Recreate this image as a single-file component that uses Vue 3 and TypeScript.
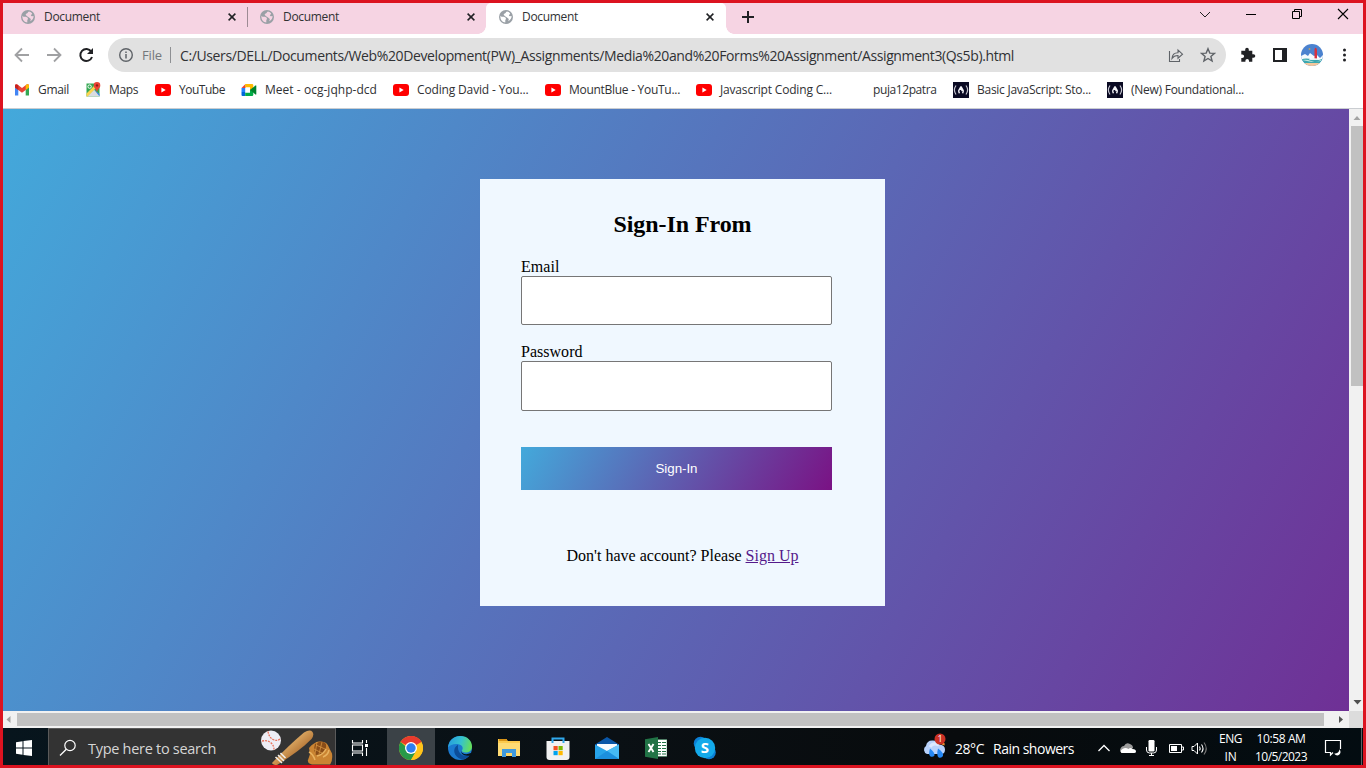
<script setup lang="ts">
import { nextTick, type Directive } from 'vue'

interface Bookmark {
  label: string
  icon: 'gmail' | 'maps' | 'youtube' | 'meet' | 'none' | 'fcc'
  textWidth: number
}

const tabs = [
  { title: 'Document', active: false },
  { title: 'Document', active: false },
  { title: 'Document', active: true },
]

const bookmarks: Bookmark[] = [
  { label: 'Gmail', icon: 'gmail', textWidth: 31 },
  { label: 'Maps', icon: 'maps', textWidth: 29 },
  { label: 'YouTube', icon: 'youtube', textWidth: 46 },
  { label: 'Meet - ocg-jqhp-dcd', icon: 'meet', textWidth: 112 },
  { label: 'Coding David - You...', icon: 'youtube', textWidth: 111.5 },
  { label: 'MountBlue - YouTu...', icon: 'youtube', textWidth: 111 },
  { label: 'Javascript Coding C...', icon: 'youtube', textWidth: 112 },
  { label: 'puja12patra', icon: 'none', textWidth: 63.5 },
  { label: 'Basic JavaScript: Sto...', icon: 'fcc', textWidth: 114 },
  { label: '(New) Foundational...', icon: 'fcc', textWidth: 113 },
]

// Tracks a single line of text so that it spans the given number of pixels.
const vFit: Directive<HTMLElement, number> = {
  mounted(el, binding) {
    nextTick(() => {
      const count = (el.textContent ?? '').trim().length
      const natural = el.getBoundingClientRect().width
      el.style.letterSpacing = `${(binding.value - natural) / count}px`
    })
  },
}
</script>

<template>
  <div class="screen">
    <header class="tabstrip">
      <div v-for="(tab, i) in tabs" :key="i" class="tab" :class="{ active: tab.active, divided: i === 0 }">
        <svg class="globe" width="14" height="14" viewBox="2 2 20 20">
          <path d="M12 2a10 10 0 1 0 0 20 10 10 0 0 0 0-20zm-1 17.930c-3.950-.49-7-3.850-7-7.930 0-.62.080-1.210.210-1.790L5.500 11.500H9q3 .3 3 3l-1 2v3.430zM15 18q1-2 1-3l-3-2.500c-1-.6-1-1-2.500-1.500L8.500 8.500 10 7q2-.5 2-2l1.500-1q3 .5 4.500 3l-2 3 1.500 1 2.400-.5q.5 4.500-4.900 7.500z" fill="#9aa0a6" />
        </svg>
        <span v-fit="56" class="tab-title">{{ tab.title }}</span>
        <svg class="close" width="8" height="8" viewBox="0 0 8 8"><path d="M.6.6l6.800 6.800M7.400.6L.6 7.400" stroke="#202124" stroke-width="1.500" /></svg>
      </div>
      <svg class="plus" width="12" height="12" viewBox="0 0 12 12"><path d="M6 0v12M0 6h12" stroke="#202124" stroke-width="2" /></svg>
      <div class="window-buttons">
        <svg width="46" height="22" viewBox="0 0 46 22"><path d="M18 9l5 5 5-5" fill="none" stroke="#222" /></svg>
        <svg width="46" height="22" viewBox="0 0 46 22"><path d="M18 11.500h10" stroke="#000" /></svg>
        <svg width="46" height="22" viewBox="0 0 46 22"><path d="M18.500 8.500h7v7h-7zM20.500 8.500v-2h7v7h-2" fill="none" stroke="#000" /></svg>
        <svg width="46" height="22" viewBox="0 0 46 22"><path d="M18 6l10 10M28 6L18 16" stroke="#000" stroke-width="1.100" /></svg>
      </div>
    </header>

    <div class="toolbar">
      <svg width="32" height="32" viewBox="0 0 32 32"><path d="M23 16H10M16 9.500L9.500 16l6.500 6.500" fill="none" stroke="#a0a1a3" stroke-width="1.800" /></svg>
      <svg width="32" height="32" viewBox="0 0 32 32"><path d="M9 16h13M16 9.500l6.500 6.500-6.500 6.500" fill="none" stroke="#a0a1a3" stroke-width="1.800" /></svg>
      <svg width="32" height="32" viewBox="0 0 32 32"><path d="M21.300 12.600A6 6 0 1 0 22 18" fill="none" stroke="#202124" stroke-width="2" /><path d="M23 9v6h-6z" fill="#202124" /></svg>
      <div class="omnibox">
        <svg class="info" width="14" height="14" viewBox="0 0 14 14"><circle cx="7" cy="7" r="6.300" fill="none" stroke="#5f6368" stroke-width="1.400" /><path d="M7 6v4.500M7 3.500V5" stroke="#5f6368" stroke-width="1.500" /></svg>
        <span class="scheme"><span v-fit="20">File</span></span>
        <i class="sep" />
        <span v-fit="834" class="url">C:/Users/DELL/Documents/Web%20Development(PW)_Assignments/Media%20and%20Forms%20Assignment/Assignment3(Qs5b).html</span>
        <svg class="share" width="16" height="16" viewBox="0 0 16 16"><path d="M1.500 4v10.500h10V12M4 11.500c.3-4 2.500-5.800 6-5.800V3l4.500 4.200L10 11.200V8.500c-2.800-.1-4.500.8-6 3z" fill="none" stroke="#5f6368" stroke-width="1.100" /></svg>
        <svg class="star" width="16" height="16" viewBox="0 0 16 16"><path d="M8 1.700l1.800 4.400 4.700.3-3.600 3 1.200 4.600L8 11.500 3.900 14l1.200-4.600-3.600-3 4.700-.3z" fill="none" stroke="#5f6368" stroke-width="1.400" /></svg>
      </div>
      <div class="actions">
        <svg width="16" height="16" viewBox="0 0 16 16"><path d="M1.300 3.800h3.900V2.600a1.800 1.800 0 0 1 3.600 0v1.200h3.500v3.400h1.200a1.800 1.800 0 0 1 0 3.600h-1.200v4H9v-1.100a1.800 1.800 0 0 0-3.600 0v1.100H1.300V11h1a1.800 1.800 0 0 0 0-3.600h-1z" fill="#202124" /></svg>
        <svg width="16" height="16" viewBox="0 0 16 16"><path d="M2 2h12v12H2z" fill="#fff" stroke="#202124" stroke-width="2" /><path d="M10 2h4v12h-4z" fill="#202124" /></svg>
        <svg width="22" height="22" viewBox="0 0 22 22">
          <clipPath id="face"><circle cx="11" cy="11" r="11" /></clipPath>
          <g clip-path="url(#face)">
            <path fill="#4b82cf" d="M0 0h22v22H0z" />
            <path fill="#f5f9fc" d="M0 12l4-2 3 2 2-3 4 3 3-1 3 3 3-3v5H0z" />
            <path fill="#3ca8b0" d="M0 15.500q5-2 11 0t11-1v6H0z" />
            <path fill="#c4e8df" d="M1 16q5-1 9 1t10-1v1l-9 1z" />
            <path fill="#f5c79c" d="M0 19h22v3H0z" />
            <path fill="#d9303c" d="M13.500 5q1.500-3 2.500 1v8.500h-2.500z" />
            <path fill="#e6f3f4" d="M8 15.500q5-2 10 0v.5H8z" /><circle cx="8.500" cy="5" r="1" fill="#b6a26b" />
          </g>
        </svg>
        <svg width="16" height="16" viewBox="0 0 16 16"><g fill="#202124"><circle cx="8.500" cy="3" r="1.500" /><circle cx="8.500" cy="8" r="1.500" /><circle cx="8.500" cy="13" r="1.500" /></g></svg>
      </div>
    </div>

    <nav class="bookmarks">
      <div v-for="(b, i) in bookmarks" :key="i" class="bookmark">
        <svg v-if="b.icon === 'gmail'" width="16" height="16" viewBox="0 0 16 16"><path d="M1 4v9.500h3.300V6.500z" fill="#4285f4" /><path d="M11.700 6.500v7H15V4z" fill="#34a853" /><path d="M1 3.700C1 2.200 2.700 2 3.700 2.800L8 6l4.300-3.200C13.300 2 15 2.200 15 3.700V5.600L8 10.700 1 5.600z" fill="#ea4335" /><path d="M11.700 3.300V8L15 5.600V3.800C15 2.200 13.300 2 12.300 2.800z" fill="#fbbc04" /><path d="M1 3.800v1.800L4.300 8V3.300C3 2 1 2.200 1 3.800z" fill="#c5221f" /></svg>
        <svg v-else-if="b.icon === 'maps'" width="16" height="16" viewBox="0 0 16 16"><path d="M1.500 1.500h13v13h-13z" fill="#34a853" /><path d="M2 14.500L9 7.500l5.500 6v1z" fill="#d9dce0" /><path d="M1.500 11.500l9-9 2 2-10 10h-1z" fill="#fbd44c" /><path d="M9.500 8l5 4v2.500z" fill="#4285f4" /><circle cx="4.600" cy="4.600" r="1.700" fill="none" stroke="#fff" /><path d="M12 .1a3.300 3.300 0 0 0-3.300 3.300C8.700 6 11.200 6.500 12 10c.8-3.500 3.300-4 3.300-6.600A3.300 3.300 0 0 0 12 .1z" fill="#ea4335" /><circle cx="12" cy="3.400" r="1.200" fill="#8c1c16" /></svg>
        <svg v-else-if="b.icon === 'youtube'" width="16" height="16" viewBox="0 0 16 16"><rect y="2" width="16" height="12" rx="3" fill="#f00" /><path d="M6.400 5.500L10.700 8l-4.300 2.500z" fill="#fff" /></svg>
        <svg v-else-if="b.icon === 'meet'" width="16" height="16" viewBox="0 0 16 16"><path d="M4.500 2v4H.5z" fill="#ea4335" /><path d="M.5 6h3.700v4H.5z" fill="#2684fc" /><path d="M.5 10h3.700v4H1.500a1 1 0 0 1-1-1z" fill="#0066da" /><path d="M4.200 2H11q1.300 0 1.300 1.300V6L9 8.500V5.300H4.200z" fill="#ffba00" /><path d="M4.200 10.700H9V8l3.300-2.500v7.200q0 1.300-1.300 1.300H4.200z" fill="#00ac47" /><path d="M9 8l5.500-4.500q.8-.5.8.5v8q0 1-.8.5z" fill="#00832d" /></svg>
        <svg v-else-if="b.icon === 'fcc'" width="16" height="16" viewBox="0 0 16 16"><path d="M0 0h16v16H0z" fill="#0a0a23" /><path d="M3 3.500Q-.2 8 3 12.500M13 3.500q3.200 4.500 0 9" fill="none" stroke="#c5c5cf" stroke-width="1.200" /><path d="M8 4.500L5.800 8.500q-.3 1.500.7 2.700M8 4.500l2.200 4q.3 1.500-.7 2.700M7.500 6l2 3" fill="none" stroke="#f4f4f8" stroke-width="1.400" /></svg>
        <span v-else class="blank" />
        <span v-fit="b.textWidth" class="bookmark-label">{{ b.label }}</span>
      </div>
    </nav>

    <div class="viewport">
      <main class="page">
        <form class="card" @submit.prevent>
          <h2><span v-fit="138">Sign-In From</span></h2>
          <label for="email"><span v-fit="38.500">Email</span></label>
          <input id="email" type="email" />
          <label for="password"><span v-fit="61.500">Password</span></label>
          <input id="password" type="password" />
          <button type="submit"><span v-fit="42">Sign-In</span></button>
          <p><span v-fit="232">Don't have account? Please <a href="#">Sign Up</a></span></p>
        </form>
      </main>
      <div class="vscroll">
        <svg width="14" height="17" viewBox="0 0 14 17"><path d="M4.500 11L8 7l3.500 4z" fill="#a3a3a3" /></svg>
        <i class="vthumb" />
        <svg class="end" width="14" height="17" viewBox="0 0 14 17"><path d="M4.500 6h8l-4 4.500z" fill="#505050" /></svg>
      </div>
      <div class="hscroll">
        <svg width="14" height="17" viewBox="0 0 14 17"><path d="M7.500 5v7L3.500 8.500z" fill="#a3a3a3" /></svg>
        <i class="hthumb" />
        <svg class="end" width="17" height="17" viewBox="0 0 17 17"><path d="M7 5v7l4-3.500z" fill="#505050" /></svg>
      </div>
      <i class="corner" />
    </div>

    <footer class="taskbar">
      <div class="start"><svg width="16" height="16" viewBox="0 0 16 16"><path d="M0 2.200L6.500 1.300V7.500H0zM7.500 1.100L16 0v7.500H7.500zM0 8.500h6.500v6.200L0 13.800zM7.500 8.500H16V16l-8.500-1.100z" fill="#fff" /></svg></div>
      <div class="search">
        <svg width="18" height="18" viewBox="0 0 18 18"><circle cx="11" cy="6.500" r="5.200" fill="none" stroke="#fff" stroke-width="1.200" /><path d="M7.300 10.200L1 16.500" stroke="#fff" stroke-width="1.300" /></svg>
        <span class="search-text"><span v-fit="128">Type here to search</span></span>
        <svg class="baseball" width="74" height="36" viewBox="0 0 74 36">
          <defs><linearGradient id="wood" x1="0" y1="0" x2="1" y2="1"><stop offset=".3" stop-color="#e8b871" /><stop offset=".7" stop-color="#ad6c2e" /></linearGradient></defs>
          <circle cx="11" cy="11.500" r="10" fill="#eeedf5" />
          <path d="M8 2.500q1 6 5 8t7-.5M2 12q5-1 8.500 1.500t3.500 7" fill="none" stroke="#e8745e" stroke-width="1.300" stroke-dasharray="2 1" />
          <path d="M12 34Q29 16 44 3.500 50 0 52.500 3q2 3-1 7Q41 21 17 36q-4 0-5-2z" fill="url(#wood)" />
          <path d="M15.500 28l6.500 6M18 26l6 6M20.500 24l5 5" stroke="#f1ede7" stroke-width="1.600" />
          <path d="M48 31l2-6-1-6q5-6 10-6.500 8-1 10 6l3 6q1 7-2 11H52q-5-1-4-5z" fill="#ca8432" />
          <path d="M55 15q7-5 11 0 1 6-5 10l-5 1q-3-5-1-11z" fill="#8a4d18" />
          <path d="M56 16l9 4M54 20l8 4M57 13l-2 12M62 13l-3 12" stroke="#d79541" stroke-width=".8" />
          <path d="M49 23q4 2 6 8M57 27q6-1 9-7M63 28q5-2 6-7" fill="none" stroke="#e8b260" stroke-width="1.500" />
        </svg>
      </div>
      <div class="apps">
        <div class="app"><svg width="18" height="18" viewBox="0 0 18 18"><path d="M1.500 1v3h10V1M1.500 17v-3h10v3M1.500 6h10v6h-10zM15.500 1v3M15.500 9v8" fill="none" stroke="#fff" stroke-width="1.100" /><path d="M14 5h3v3h-3z" fill="#fff" /></svg></div>
        <div class="app current"><svg width="24" height="24" viewBox="0 0 24 24"><circle cx="12" cy="12" r="12" fill="#ffc41b" /><path d="M12 12L1.600 6A12 12 0 0 1 22.400 6z" fill="#e83b2e" /><path d="M12 0A12 12 0 0 1 22.400 6H12z" fill="#e83b2e" /><path d="M1.600 6A12 12 0 0 0 12 24l5.200-9H12z" fill="#279a48" /><path d="M12 24l5.200-9L22.400 6A12 12 0 0 1 12 24z" fill="#ffc41b" /><circle cx="12" cy="12" r="6" fill="#fff" /><circle cx="12" cy="12" r="4.700" fill="#2d7ff0" /></svg></div>
        <div class="app"><svg width="24" height="24" viewBox="0 0 24 24"><defs><linearGradient id="edge" x1="0" y1=".2" x2="1" y2=".4"><stop stop-color="#269bde" /><stop offset=".55" stop-color="#35c2cf" /><stop offset="1" stop-color="#65de5b" /></linearGradient></defs><circle cx="12" cy="12" r="12" fill="#1b79cf" /><path d="M0 11.500C1 4 6 0 12.300 0 19.500 0 24 5 24 10.500c0 4-3 6-6.500 6-3 0-4-1.200-3.500-2.200 1.500-2 .7-5.300-3.500-6C6 7.500 2 9 0 11.500z" fill="url(#edge)" /><path d="M10 8.800C4 12 5 21 14 23.500c3.500-.3 6.500-2.500 8-4.500-6 2.500-13-.5-12-10.200z" fill="#0c4d99" /><path d="M13.500 14.500c-1 3 4.200 5 9.500 2.500l2 .5-2 2c-5 1-11-1-9.500-5z" fill="#081217" /></svg></div>
        <div class="app"><svg width="22" height="20" viewBox="0 0 22 20"><path d="M0 1h8l2 2h12v15H0z" fill="#fcca4d" /><path d="M1 1h8v2H1z" fill="#d99417" /><path d="M0 5h22v13H0z" fill="#fedb74" /><path d="M4 19v-8h14v8h-4v-4H8v4z" fill="#3f99dd" /><path d="M8 15h6v3H8z" fill="#ffd666" /></svg></div>
        <div class="app"><svg width="24" height="24" viewBox="0 0 24 24"><path d="M.5 5h23v16q0 3-3 3h-17q-3 0-3-3z" fill="#f1f1f1" /><path d="M6.500 7V2.500h11V7" fill="none" stroke="#30a9ed" stroke-width="2" /><path d="M7.500 10h4.200v4.200H7.500z" fill="#f25022" /><path d="M12.500 10h4.200v4.200h-4.200z" fill="#7fba00" /><path d="M7.500 15h4.200v4.200H7.500z" fill="#00a4ef" /><path d="M12.500 15h4.200v4.200h-4.200z" fill="#ffb900" /></svg></div>
        <div class="app"><svg width="24" height="22" viewBox="0 0 24 22"><path d="M0 7.500L12 0l12 7.500V22H0z" fill="#0a57a8" /><path d="M2 7h20v8H2z" fill="#f8fbfe" /><path d="M0 7.500L12 14l12-6.500V22H0z" fill="#27a3e9" /><path d="M12 14l12-6.500V22z" fill="#45baf4" /><path d="M0 22l12-8 12 8z" fill="#1c8fdd" /></svg></div>
        <div class="app"><svg width="22" height="22" viewBox="0 0 22 22"><path d="M12 2.500h10v17H12z" fill="#fff" stroke="#237848" stroke-width=".5" /><path d="M13 5.500h3M17 5.500h4M13 8.500h3M17 8.500h4M13 11.500h3M17 11.500h4M13 14.500h3M17 14.500h4M13 17h3M17 17h4" stroke="#217346" stroke-width="1.100" /><path d="M0 2.200L13 0v22L0 19.800z" fill="#217346" /><path d="M3.500 7l5 8M8.500 7l-5 8" stroke="#fff" stroke-width="1.900" /></svg></div>
        <div class="app"><svg width="24" height="24" viewBox="0 0 24 24"><circle cx="7.500" cy="7.500" r="6.800" fill="#0b7fd5" /><circle cx="16" cy="16.500" r="6.800" fill="#0b7fd5" /><circle cx="12" cy="12" r="10.200" fill="#13a9ea" /><text x="12" y="17.300" text-anchor="middle" fill="#fff" font-family="Open Sans, sans-serif" font-weight="700" font-size="15">S</text></svg></div>
      </div>
      <div class="tray">
        <div class="weather">
          <svg width="24" height="26" viewBox="0 0 24 26"><path d="M4 21a4.500 4.500 0 0 1-1-8q1-6 7-5.500 5 .2 6 4 6 .5 6 5 0 4.500-4 4.500z" fill="#b8d2fb" /><path d="M20.500 9q2 1.500 1 3.500l-3-1z" fill="#ee952e" /><path d="M7 14q3-5 9-2" stroke="#dce9ff" stroke-width="3" fill="none" /><path d="M7 15.500q5 4 4.500 7-1.500 2-4 1-2.500-2-.5-8zM15 15.500q6 4 5 7.500-1.500 2.500-4.300 1.500-2.500-2-.7-9z" fill="#2588f4" /><circle cx="17" cy="6" r="5.500" fill="#cc3124" /><text x="17" y="9.200" text-anchor="middle" fill="#fff" font-family="Open Sans, sans-serif" font-size="9">1</text></svg>
          <span class="temperature"><span v-fit="29">28°C</span></span>
          <span v-fit="81">Rain showers</span>
        </div>
        <svg width="24" height="20" viewBox="0 0 24 20"><path d="M6.500 13l5.500-5.500L17.500 13" fill="none" stroke="#fff" stroke-width="1.300" /></svg>
        <svg width="24" height="20" viewBox="0 0 24 20"><path d="M4 12q1-4 4-4 2-4 6-2 3 1 3 4l-8 5H6q-2-1-2-3z" fill="#9b9b9b" /><path d="M5.500 15q-2-2 1-4 3-2 6 0 2-2 4 0 3.500 0 3.500 2.500 0 1.500-2 1.500z" fill="#fff" /></svg>
        <svg width="24" height="20" viewBox="0 0 24 20"><rect x="8.500" y="2" width="6" height="11.500" rx="1.200" fill="#fff" /><path d="M6.500 9v3q0 3 3 3h4q3 0 3-3V9M11.500 15v2.500M9 17.500h5" fill="none" stroke="#fff" /></svg>
        <svg width="24" height="20" viewBox="0 0 24 20"><path d="M5.500 6.500h12v8h-12zM18 9h1.500v3H18" fill="none" stroke="#fff" /><path d="M7 8h6v5H7z" fill="#fff" /></svg>
        <svg width="24" height="20" viewBox="0 0 24 20"><path d="M4 8.500h2l3.500-3.500v11L6 12.500H4z" fill="none" stroke="#fff" /><path d="M11.500 8.500q1.300 2 0 4M13.500 6.500q3 4 0 8" fill="none" stroke="#fff" stroke-width="1.100" /><path d="M16 4.500q4.500 6 0 12" fill="none" stroke="#777" stroke-width="1.100" /></svg>
        <div class="stack language"><span v-fit="23">ENG</span><span v-fit="12">IN</span></div>
        <div class="stack clock"><span v-fit="49">10:58 AM</span><span v-fit="52">10/5/2023</span></div>
        <svg class="notice" width="18" height="18" viewBox="0 0 18 18"><path d="M9 13.500L6.500 16v-2.500h-5v-12h15V10" fill="none" stroke="#fff" stroke-width="1.200" /><path d="M15.500 10.200q-.3 4-5.300 4.500 2.500 3 5 1 2.500-2.500.3-5.500z" fill="#fff" /></svg>
        <i class="desktop-edge" />
      </div>
    </footer>
  </div>
</template>

<style>
html,
body {
  margin: 0;
  overflow: hidden;
}
</style>

<style scoped>
.screen {
  box-sizing: border-box;
  width: 1366px;
  height: 768px;
  border: 3px solid #dc1320;
  display: flex;
  flex-direction: column;
  background: #fff;
  font-family: 'Open Sans', 'Noto Sans', sans-serif;
  color: #303134;
  overflow: hidden;
}
svg {
  display: block;
  flex: none;
}
span {
  white-space: nowrap;
}
.tabstrip {
  height: 31px;
  flex: none;
  display: flex;
  padding-left: 5px;
  background: #f6d4e3;
}
.tab {
  box-sizing: border-box;
  width: 239px;
  height: 31px;
  padding: 0 11px 3px 13px;
  display: flex;
  align-items: center;
  position: relative;
  font-size: 12px;
}
.tab.divided::after {
  content: '';
  position: absolute;
  right: -1px;
  top: 4px;
  width: 1px;
  height: 20px;
  background: #9d8b94;
}
.tab.active {
  width: 240px;
  background: #fff;
  border-radius: 5px 5px 0 0;
}
.tab.active::before,
.tab.active::after {
  content: '';
  position: absolute;
  bottom: 0;
  width: 8px;
  height: 8px;
}
.tab.active::before {
  left: -8px;
  background: radial-gradient(circle at 0 0, transparent 7.500px, #fff 8px);
}
.tab.active::after {
  right: -8px;
  background: radial-gradient(circle at 100% 0, transparent 7.500px, #fff 8px);
}
.tab-title {
  margin: -1px 0 0 9px;
}
.close {
  margin-left: auto;
}
.tab.active .close {
  margin-right: 1px;
}
.plus {
  margin: 8px 0 0 16px;
}
.window-buttons {
  display: flex;
  margin-left: auto;
}
.window-buttons svg:last-child {
  margin-right: -3px;
}
.toolbar {
  height: 42px;
  flex: none;
  display: flex;
  align-items: center;
  padding-left: 3px;
}
.omnibox {
  width: 1118px;
  height: 34px;
  margin-left: 6px;
  border-radius: 17px;
  background: #e1e1e1;
  display: flex;
  align-items: center;
  font-size: 14px;
  flex: none;
}
.info {
  margin-left: 11px;
}
.scheme {
  width: 28px;
  margin-left: 9px;
  color: #74777b;
  font-size: 13px;
}
.sep {
  width: 1px;
  height: 16px;
  background: #8e9093;
}
.url {
  margin-left: 9px;
  color: #303134;
}
.share {
  margin-left: auto;
}
.star {
  margin: 0 10px 0 16px;
}
.actions {
  display: flex;
  align-items: center;
  width: 112px;
  justify-content: space-between;
  margin-left: 14px;
}
.actions svg:nth-child(3) {
  margin: 0 -3px;
}
.bookmarks {
  height: 33px;
  box-sizing: border-box;
  padding: 0 0 4px 11px;
  border-bottom: 1px solid #cacdd1;
  display: grid;
  grid-template-columns: 71px 70px 86px 152px 152px 151px 153px 104px 154px 150px;
  align-items: center;
  font-size: 12px;
  flex: none;
}
.bookmark {
  display: flex;
  align-items: center;
  gap: 8px;
}
.bookmark-label {
  margin-top: -1px;
}
.blank {
  width: 16px;
}
.viewport {
  flex: 1;
  display: grid;
  grid-template: 602px 17px / 1346px 14px;
}
.page {
  display: flex;
  justify-content: center;
  align-items: flex-start;
  padding: 70px 0 0 13px;
  box-sizing: border-box;
  background: linear-gradient(120deg, #43a9db, #7a1284) 0 0 / 1354px 1315px no-repeat;
}
.card {
  box-sizing: border-box;
  width: 405px;
  height: 427px;
  padding: 31px 41px 0;
  background: #f0f8ff;
  display: flex;
  flex-direction: column;
  font-family: 'Liberation Serif', serif;
  font-size: 16px;
  color: #000;
}
h2 {
  margin: 0;
  height: 28px;
  line-height: 28px;
  font-size: 24px;
  text-align: center;
}
label {
  height: 18px;
  line-height: 18px;
  margin-top: 20px;
}
input {
  box-sizing: border-box;
  width: 311px;
  height: 49px;
  border: 1px solid #767676;
  border-radius: 2px;
  background: #fff;
  padding: 0 8px;
  outline: none;
}
input + label {
  margin-top: 18px;
}
#password {
  height: 50px;
}
button {
  width: 311px;
  height: 43px;
  margin-top: 36px;
  padding: 0;
  border: 0;
  color: #fff;
  font: 13.333px 'Liberation Sans', sans-serif;
  background: linear-gradient(120deg, #43a9db, #7a1284);
}
p {
  margin: 57px 0 0;
  height: 18px;
  line-height: 18px;
  text-align: center;
}
a {
  color: #551a8b;
}
.vscroll {
  background: #f1f1f1;
  display: flex;
  flex-direction: column;
}
.vthumb {
  width: 12px;
  height: 260px;
  margin-left: 2px;
  background: #c1c1c1;
}
.vscroll .end {
  margin-top: auto;
}
.hscroll {
  background: #f1f1f1;
  display: flex;
}
.hthumb {
  width: 1307px;
  height: 13px;
  margin-top: 2px;
  background: #c1c1c1;
}
.hscroll .end {
  margin-left: auto;
}
.corner {
  background: #dcdcdc;
}
.taskbar {
  height: 37px;
  flex: none;
  display: flex;
  background: linear-gradient(90deg, #07151d, #0a1014 45%, #080b0d 70%, #030c11);
  color: #fff;
}
.start {
  width: 45px;
  padding: 12px 0 0 13px;
  box-sizing: border-box;
}
.search {
  box-sizing: border-box;
  width: 288px;
  height: 37px;
  border: solid #5a5a5a;
  border-width: 1px 1px 0;
  background: #333;
  display: flex;
  align-items: center;
  padding: 2px 0 0 10px;
  font-size: 14.500px;
  color: #d6d6d6;
}
.search-text {
  margin: 1px 0 0 11px;
}
.baseball {
  margin: -2px 1px 0 auto;
}
.apps {
  display: flex;
}
.app {
  width: 49px;
  height: 37px;
  display: flex;
  align-items: center;
  justify-content: center;
  padding-top: 2px;
  box-sizing: border-box;
}
.app:first-child {
  width: 51px;
  padding-right: 3px;
}
.app.current {
  width: 48px;
  background: #3b4247;
}
.tray {
  margin-left: auto;
  display: flex;
  align-items: center;
  padding-top: 3px;
  height: 34px;
  font-size: 14px;
}
.weather {
  width: 168px;
  display: flex;
  align-items: center;
}
.weather svg {
  margin: -4px 8px 0 -1px;
}
.temperature {
  width: 38px;
}
.stack {
  display: flex;
  flex-direction: column;
  align-items: center;
  font-size: 12px;
  line-height: 18px;
}
.language {
  width: 37px;
}
.clock {
  width: 64px;
  margin-top: -1px;
}
.notice {
  margin: 0 19px 0 11px;
}
.desktop-edge {
  width: 1px;
  height: 37px;
  margin: -3px 1px 0 0;
  background: #5b6266;
}
</style>
